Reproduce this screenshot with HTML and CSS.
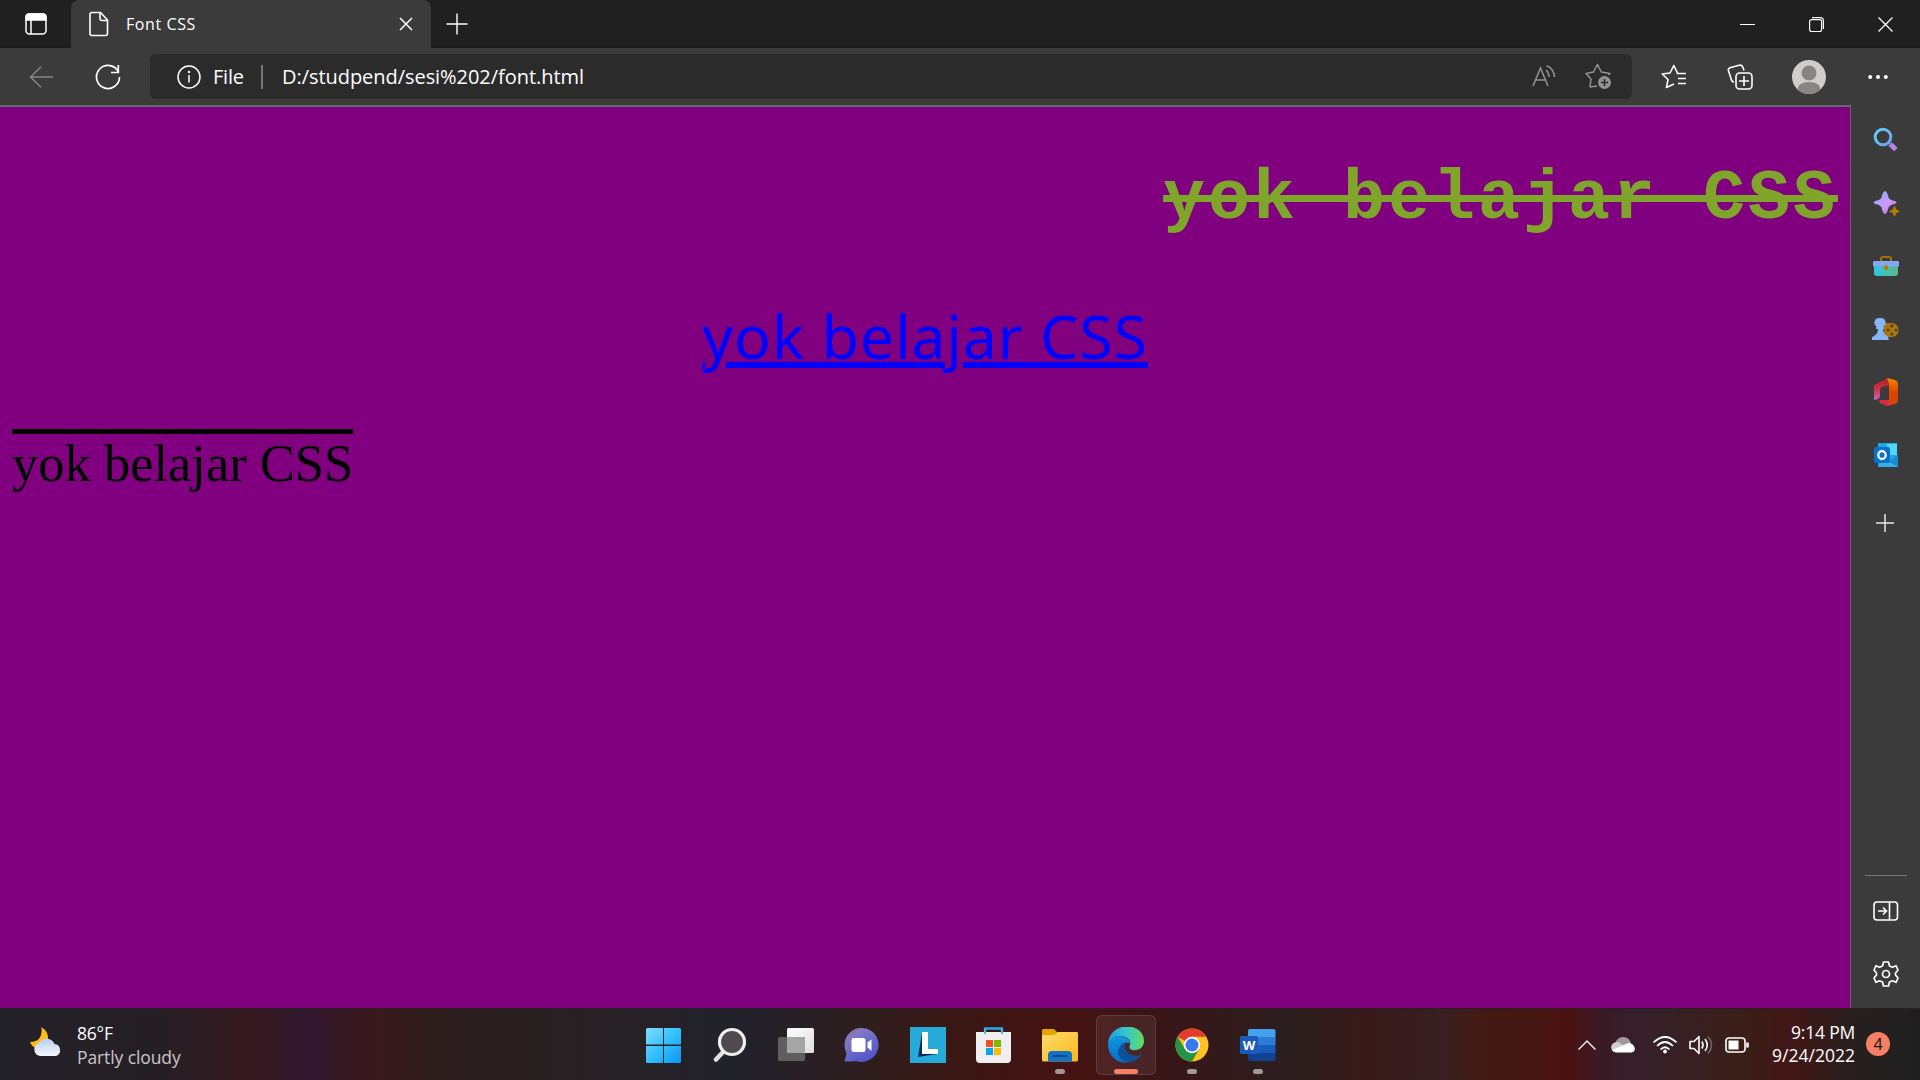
FILE: index.html
```html
<!DOCTYPE html>
<html lang="en">
<head>
<meta charset="utf-8">
<title>Font CSS</title>
<link rel="stylesheet" href="styles.css">
</head>
<body>
<div class="desktop">
  <header class="tabs">
    <svg class="tabs-menu" width="22" height="24" viewBox="0 0 22 24" fill="none" stroke="#fff" stroke-width="1.5"><rect x="1" y="2" width="20" height="20" rx="3.5"/><path d="M1 8V5Q1 2 4 2H18Q21 2 21 5V8Z" fill="#fff"/><path d="M6 8V22"/></svg>
    <div class="tab">
      <svg width="20" height="26" viewBox="0 0 20 26" fill="none" stroke="#fff" stroke-width="1.6" stroke-linejoin="round"><path d="M3 1.5H11.5L18.5 9V22.5Q18.5 24.5 16.5 24.5H3Q1 24.5 1 22.500V3.500Q1 1.500 3 1.500Z"/><path d="M11 1.500V7.500Q11 9.500 13 9.500H18.500"/></svg>
      <span class="tab-title">Font CSS</span>
      <svg width="14" height="14" viewBox="0 0 14 14" stroke="#fff" stroke-width="1.5"><path d="M1 1L13 13M13 1L1 13"/></svg>
    </div>
    <svg class="new-tab" width="22" height="22" viewBox="0 0 22 22" stroke="#fff" stroke-width="1.400"><path d="M11 .5V21.500M.5 11H21.500"/></svg>
    <div class="window-buttons">
      <svg width="15" height="15" viewBox="0 0 15 15" stroke="#fff"><path d="M0 7.500H15"/></svg>
      <svg width="15" height="15" viewBox="0 0 15 15" fill="none" stroke="#fff" stroke-width="1.200"><rect x=".6" y="2.600" width="12" height="12" rx="2"/><path d="M3 .6H11Q14.400 .6 14.400 4V12"/></svg>
      <svg width="15" height="15" viewBox="0 0 15 15" stroke="#fff" stroke-width="1.300"><path d="M.5 .5L14.500 14.500M14.500 .5L.5 14.500"/></svg>
    </div>
  </header>

  <nav class="toolbar">
    <svg class="back" width="24" height="22" viewBox="0 0 24 22" fill="none" stroke="#868686" stroke-width="1.500"><path d="M24 11H1.500M12 .8L1.500 11L12 21.200"/></svg>
    <svg class="reload" width="26" height="26" viewBox="0 0 26 26" fill="none" stroke="#fff" stroke-width="1.700"><path d="M23.500 8.300A11.500 11.500 0 1 0 24.500 13"/><path d="M23.300 1V8.500H16"/></svg>
    <div class="address">
      <svg width="24" height="24" viewBox="0 0 24 24" fill="none" stroke="#fff" stroke-width="1.500"><circle cx="12" cy="12" r="11"/><path d="M12 10V17.500"/><circle cx="12" cy="7" r=".5"/></svg>
      <span class="scheme">File</span>
      <i class="separator"></i>
      <span class="url">D:/studpend/sesi%202/font.html</span>
      <svg class="read-aloud" width="24" height="24" viewBox="0 0 24 24" fill="none" stroke="#929292" stroke-width="1.500"><path d="M1 21L8.500 3L16 21M3.500 15H13.500M14 5Q17 7.500 17 12M14.500 .8Q22 3.500 22.500 12"/></svg>
      <svg width="27" height="27" viewBox="0 0 27 27" fill="none" stroke="#929292" stroke-width="1.500" stroke-linejoin="round"><path d="M12 23L5 24L6 16L1 10.500L8.500 9L12.500 1.500L16.300 9L25 10.500L23.500 12"/><circle cx="19.500" cy="19.500" r="6.500" fill="#929292" stroke="none"/><path d="M19.500 16V23M16 19.500H23" stroke="#2b2b2b"/></svg>
    </div>
    <div class="tools">
      <svg width="26" height="26" viewBox="0 0 26 26" fill="none" stroke="#fff" stroke-width="1.600" stroke-linejoin="round"><path d="M16.500 9L12.800 1.500L9 9L1.200 10L7 15.500L5.500 23.500L13 20M15.500 9.500H25M17 14.500H25M17 19.500H25"/></svg>
      <svg width="26" height="26" viewBox="0 0 26 26" fill="none" stroke="#fff" stroke-width="1.600"><rect x="9" y="9" width="16" height="16" rx="3.500"/><path d="M17 12V22M12 17H22M7 18Q5 18 4.300 15.500L1.400 6.500Q.8 4.500 3 3.700L12 1.300Q15 .5 16 3.500L17 6.500"/></svg>
      <svg class="avatar" width="34" height="34" viewBox="0 0 34 34"><circle cx="17" cy="17" r="17" fill="#d0cecb"/><circle cx="17" cy="13" r="7.500" fill="#8a8583"/><path d="M5.500 29.500Q6 22 17 22T28.500 29.500A17 17 0 0 1 5.500 29.500" fill="#8a8583"/></svg>
      <svg width="20" height="6" viewBox="0 0 20 6" fill="#fff"><circle cx="2.200" cy="3" r="2"/><circle cx="10" cy="3" r="2"/><circle cx="17.800" cy="3" r="2"/></svg>
    </div>
  </nav>

  <div class="workspace">
    <main class="page">
      <p class="line strike">yok belajar CSS</p>
      <p class="line under">yok belajar CSS</p>
      <p class="line over">yok belajar CSS</p>
    </main>
    <aside class="sidebar">
      <div class="side-item"><svg width="26" height="26" viewBox="0 0 26 26"><defs><linearGradient id="lens" x1="0" y1="0" x2="1" y2="1"><stop stop-color="#62d2f2"/><stop offset="1" stop-color="#6f9cf5"/></linearGradient></defs><path d="M17 17L23 22.500" stroke="#b981ec" stroke-width="5"/><path d="M15 15L18 18" stroke="#8b8585" stroke-width="1.500"/><circle cx="10" cy="10" r="7.800" fill="none" stroke="url(#lens)" stroke-width="3"/></svg></div>
      <div class="side-item"><svg width="28" height="28" viewBox="0 0 28 28"><defs><linearGradient id="spark" x1="0" y1="0" x2="1" y2="1"><stop stop-color="#7db2ff"/><stop offset=".6" stop-color="#cf96fa"/><stop offset="1" stop-color="#9b70e5"/></linearGradient></defs><path d="M13 2Q15 2 16.500 8.500Q17.500 11 23.500 12.300Q25.500 13.500 23.500 14.700Q17.500 16 16.500 18.500Q15 25 13 25Q11 25 9.500 18.500Q8.500 16 2.500 14.700Q.8 13.500 2.500 12.300Q8.500 11 9.500 8.500Q11 2 13 2Z" fill="url(#spark)"/><path d="M22.500 16.500L24.500 20.500L28 22.200L24.500 24L22.500 28L20.500 24L17 22.200L20.500 20.500Z" fill="#b67b00"/></svg></div>
      <div class="side-item"><svg width="26" height="22" viewBox="0 0 26 22"><defs><linearGradient id="box"><stop stop-color="#29c7e5"/><stop offset="1" stop-color="#5eb888"/></linearGradient></defs><path d="M8 7V4Q8 2 10 2H16Q18 2 18 4V7" fill="none" stroke="#a97005" stroke-width="2"/><path d="M1 8H25V18Q25 21 22 21H4Q1 21 1 18Z" fill="url(#box)"/><rect y="6" width="26" height="5.500" rx="1" fill="#83a8f5"/><rect x="11" y="10" width="4" height="5" rx="1.500" fill="#b97a09"/></svg></div>
      <div class="side-item"><svg width="28" height="24" viewBox="0 0 28 24"><circle cx="19.500" cy="13" r="7" fill="#b17b0c"/><rect x="12" y="6" width="8" height="14" fill="#a97308"/><g fill="#494027"><circle cx="20" cy="9" r="1.500"/><circle cx="16" cy="13" r="1.500"/><circle cx="24" cy="13" r="1.500"/><circle cx="20" cy="17" r="1.500"/></g><path d="M8 1A4.800 4.800 0 0 1 11 10H12V12H11Q11 17 15 19Q17 20 16.500 23H0Q-1 20 2 19Q6 17 6 12H4V10H5A4.800 4.800 0 0 1 8 1Z" fill="#87b6fb"/></svg></div>
      <div class="side-item"><svg width="26" height="30" viewBox="0 0 26 30"><defs><linearGradient id="office" x1="0" y1="0" x2="0" y2="1"><stop stop-color="#ad1b2c"/><stop offset=".5" stop-color="#d52e45"/><stop offset="1" stop-color="#c16ac9"/></linearGradient><linearGradient id="officeR" x1="0" y1="0" x2="0" y2="1"><stop stop-color="#f38b00"/><stop offset=".5" stop-color="#df4300"/><stop offset="1" stop-color="#d84110"/></linearGradient></defs><path d="M1 8L15 1L16 8L9 10Q7 11 7 13V19Q7 21 5 22L1 23Z" fill="url(#office)"/><path d="M14 1L22 3Q25 4 25 7V23Q25 26 22 27L14 29L16 24V7Z" fill="url(#officeR)"/><path d="M6 24Q6 23 8 23H16V29H14L7 26Z" fill="#d62d3e"/></svg></div>
      <div class="side-item"><svg width="26" height="26" viewBox="0 0 26 26"><path d="M5 1H24V25H5Z" fill="#20a7e6"/><path d="M14 2H24V13H14Z" fill="#50d6fb"/><path d="M10 25L25 12V25Z" fill="#168dd1"/><path d="M10 16L25 25H6Z" fill="#36b1e8"/><rect x="1" y="5" width="16" height="16" rx="2" fill="#0872cb"/><ellipse cx="9" cy="13" rx="3.700" ry="4" fill="none" stroke="#fff" stroke-width="2.300"/></svg></div>
      <div class="side-item add"><svg width="18" height="18" viewBox="0 0 18 18" stroke="#e7e7e7" stroke-width="1.500"><path d="M9 0V18M0 9H18"/></svg></div>
      <div class="side-bottom">
        <div class="side-item"><svg width="26" height="20" viewBox="0 0 26 20" fill="none" stroke="#fff" stroke-width="1.600"><rect x="1" y="1" width="23.500" height="18" rx="3"/><path d="M16.500 1V19M5 10H13M10 6.500L13.500 10L10 13.500"/></svg></div>
        <div class="side-item"><svg width="26" height="26" viewBox="0 0 26 26" fill="none" stroke="#fff" stroke-width="1.700" stroke-linejoin="round"><path d="M10.500 1H15.500L16.500 5L19.500 6.200L23 4.700L25 9L22.500 12V14L25 17L23 21.300L19.500 19.800L16.500 21L15.500 25H10.500L9.500 21L6.500 19.800L3 21.300L1 17L3.500 14V12L1 9L3 4.700L6.500 6.200L9.500 5Z"/><circle cx="13" cy="13" r="3.500"/></svg></div>
      </div>
    </aside>
  </div>

  <footer class="taskbar">
    <div class="weather">
      <svg width="34" height="32" viewBox="0 0 34 32"><defs><linearGradient id="cloud" x1="0" y1="0" x2="0" y2="1"><stop stop-color="#b8cdf0"/><stop offset="1" stop-color="#f4f7fc"/></linearGradient></defs><path d="M12.500 1Q20 6 19 14Q14 23 7 22Q3 21 1 16Q14 16 12.500 1Z" fill="#ffbc12"/><path d="M11 30A6.500 6.500 0 0 1 9.500 17.500Q12 12.500 18 12.500Q24 13.500 25.500 18A6.200 6.200 0 0 1 27 30Z" fill="url(#cloud)"/></svg>
      <div class="weather-text"><span>86°F</span><span class="condition">Partly cloudy</span></div>
    </div>
    <div class="apps">
      <div class="app"><svg width="36" height="36" viewBox="0 0 36 36"><defs><linearGradient id="win" gradientUnits="userSpaceOnUse" x1="0" y1="0" x2="36" y2="36"><stop stop-color="#83ddff"/><stop offset=".5" stop-color="#33c1fb"/><stop offset="1" stop-color="#0a94f5"/></linearGradient></defs><path d="M1.500 1H17V17.500H0V2.500Q0 1 1.500 1ZM18 1H33.500Q35 1 35 2.500V17.500H18ZM0 19H17V36H1.500Q0 36 0 34.500ZM18 19H35V34.500Q35 36 33.500 36H18Z" fill="url(#win)"/></svg></div>
      <div class="app"><svg width="36" height="36" viewBox="0 0 36 36"><path d="M12 24L4 32.500" stroke="#dfe0e3" stroke-width="4.500" stroke-linecap="round"/><circle cx="20" cy="15" r="12.500" fill="#504a4e" stroke="#eeeff1" stroke-width="3.200"/></svg></div>
      <div class="app"><svg width="36" height="36" viewBox="0 0 36 36"><defs><linearGradient id="pane" x1="0" y1="0" x2="1" y2="1"><stop stop-color="#fff"/><stop offset="1" stop-color="#ddd"/></linearGradient></defs><rect x="9" y="1" width="27" height="25" rx="1.500" fill="url(#pane)"/><rect y="10" width="27" height="24" rx="1.500" fill="#5e5e5e"/><path d="M9 10H27V26H9Z" fill="#a5a5a5"/></svg></div>
      <div class="app"><svg width="36" height="36" viewBox="0 0 36 36"><defs><linearGradient id="chat" x1="0" y1="0" x2=".6" y2="1"><stop stop-color="#9b6aa5"/><stop offset=".3" stop-color="#8079c4"/><stop offset=".7" stop-color="#6366cb"/><stop offset="1" stop-color="#5454c9"/></linearGradient></defs><path d="M.5 34.500L2.500 26.500Q-.5 20 1 14A17 17 0 1 1 12 34Q7 34.500 .5 34.500Z" fill="url(#chat)"/><rect x="7.500" y="11" width="14" height="14" rx="2.500" fill="#fff"/><path d="M23.500 15.500L27.500 12.500V24L23.500 20.500Z" fill="#fff"/></svg></div>
      <div class="app"><svg width="36" height="36" viewBox="0 0 36 36"><path d="M0 0H36V36H0Z" fill="#26abd8"/><path d="M12 6L8 30L27 27L14 24Z" fill="#06285b"/><path d="M12 5H18V22H28V27H12Z" fill="#fff"/></svg></div>
      <div class="app"><svg width="36" height="36" viewBox="0 0 36 36"><path d="M9 8V1.500H26V8" fill="none" stroke="#2ca9e8" stroke-width="2.300"/><path d="M0 5H35V32Q35 36 31 36H4Q0 36 0 32Z" fill="#efefef"/><path d="M9 7V2M26 7V2" stroke="#42b8ee" stroke-width="2"/><path fill="#f24e22" d="M10 13H17V20H10Z"/><path fill="#7fb900" d="M18 13H25V20H18Z"/><path fill="#05a4ef" d="M10 21H17V28H10Z"/><path fill="#ffba08" d="M18 21H25V28H18Z"/></svg></div>
      <div class="app running"><svg width="36" height="36" viewBox="0 0 36 36"><defs><linearGradient id="folder" x1="0" y1="0" x2="1" y2="1"><stop stop-color="#ffda70"/><stop offset="1" stop-color="#f9b915"/></linearGradient></defs><path d="M0 12V3Q0 2 2 2H12L16 6V12Z" fill="#e5a400"/><path d="M0 9Q0 8 2 8H12L16 5H35Q36 5 36 7V33Q36 34.500 34 34.500H2Q0 34.500 0 33Z" fill="url(#folder)"/><path d="M6 34.500V28Q6 24 10 24H26Q30 24 30 28V34.500Z" fill="#1272c3"/><path d="M11 29H25" stroke="#08488c" stroke-width="2"/></svg></div>
      <div class="app running active"><svg width="36" height="36" viewBox="0 0 36 36"><defs><linearGradient id="edgeTop"><stop stop-color="#249cdb"/><stop offset=".5" stop-color="#34c6cf"/><stop offset="1" stop-color="#63dc5c"/></linearGradient><linearGradient id="edgeSide" x1="0" y1="0" x2="0" y2="1"><stop stop-color="#1298dd"/><stop offset="1" stop-color="#0869c9"/></linearGradient></defs><path d="M0 18C0-6 36-6 36 14C36 21 30 24 24 23Q20 22 22 18Q23 10 13 9Q3 9 0 18Z" fill="url(#edgeTop)"/><path d="M0 18Q2 9 12 9Q21 10 22 16Q12 14 12 23Q13 34 25 34Q16 38 8 33Q0 27 0 18Z" fill="url(#edgeSide)"/><path d="M18 15Q9 19 10 27Q14 36 23 35Q30 33 34 27Q26 31 20 26Q15 21 18 15Z" fill="#0f509c"/></svg></div>
      <div class="app running"><svg width="36" height="36" viewBox="0 0 36 36"><circle cx="18" cy="18" r="16.500" fill="#ffc222"/><path d="M18 18L3.700 9.700A16.500 16.500 0 0 1 32.300 9.750H18Z" fill="#e33b2e"/><path d="M3.700 9.700A16.500 16.500 0 0 0 18 34.500L25.100 22.100L10.900 22.100Z" fill="#249447"/><circle cx="18" cy="18" r="8.200" fill="#fff"/><circle cx="18" cy="18" r="6.500" fill="#397af0"/></svg></div>
      <div class="app running"><svg width="36" height="36" viewBox="0 0 36 36"><path d="M8 10V4Q8 2 10 2H33.500Q35.500 2 35.500 4V10Z" fill="#42a2ed"/><path d="M8 10H35.500V18H8Z" fill="#2c7cd6"/><path d="M8 18H35.500V26H8Z" fill="#195cbe"/><path d="M8 26H35.500V32Q35.500 34 33.500 34H10Q8 34 8 32Z" fill="#11418f"/><rect y="9" width="18" height="18" rx="1.500" fill="#1b5abc"/><text class="word-letter" x="9" y="23" text-anchor="middle">W</text></svg></div>
    </div>
    <div class="tray">
      <svg width="18" height="12" viewBox="0 0 18 12" fill="none" stroke="#eee" stroke-width="1.500"><path d="M.5 10.500L9 2L17.500 10.500"/></svg>
      <svg width="24" height="18" viewBox="0 0 24 18"><path d="M4 8Q6 1 12 1T20 7L12 11Z" fill="#a2989b"/><path d="M5 16Q0 15 0 11Q1 6 7 6L20 14Z" fill="#d2cccf"/><path d="M1 14L15 8Q18 6 21 8Q24 10 24 13Q23 16.500 20 16.500H5Q2 16 1 14Z" fill="#fff"/></svg>
      <svg width="24" height="18" viewBox="0 0 24 18" fill="none" stroke="#fff" stroke-width="1.700"><path d="M.5 6.500Q12-4.500 23.500 6.500M4 10Q12 2 20 10M7.500 13.500Q12 9 16.500 13.500"/><circle cx="12" cy="15.500" r="1.500" fill="#fff" stroke-width="1"/></svg>
      <svg width="24" height="20" viewBox="0 0 24 20" fill="none" stroke="#fff" stroke-width="1.600" stroke-linejoin="round"><path d="M1 6.500H5L10 1.500V18.500L5 13.500H1ZM13 6.500Q15 10 13 13.500M16 4Q20.500 10 16 16"/><path d="M19 1.500Q26 10 19 18.500" stroke="#756069"/></svg>
      <svg width="24" height="16" viewBox="0 0 24 16" fill="none" stroke="#fff" stroke-width="1.600"><rect x="1" y="1" width="19" height="14" rx="3"/><path d="M3.500 3.500H13.500V12.500H3.500Z" fill="#fff" stroke="none"/><path d="M22.500 5.500V10.500" stroke-width="2.500"/></svg>
      <div class="clock"><span>9:14 PM</span><span class="date">9/24/2022</span></div>
      <span class="badge">4</span>
    </div>
  </footer>
</div>
</body>
</html>
```
FILE: styles.css
```css
* { box-sizing: border-box; }

body {
  margin: 0;
  font-family: "Open Sans", "Noto Sans", sans-serif;
  color: #fff;
}

svg { display: block; flex: none; }

.desktop {
  width: 1920px;
  height: 1080px;
  display: flex;
  flex-direction: column;
  overflow: hidden;
  white-space: nowrap;
}

/* Tab strip */
.tabs {
  height: 48px;
  flex: none;
  display: flex;
  align-items: center;
  padding-left: 25px;
  background: linear-gradient(#202020 45px, #191919);
}

.tab {
  width: 360px;
  height: 48px;
  margin-left: 24px;
  padding: 0 18px 0 18px;
  display: flex;
  align-items: center;
  background: #3b3b3b;
  border-radius: 8px 8px 0 0;
}

.tab-title {
  flex: 1;
  margin-left: 17px;
  font-size: 16px;
  letter-spacing: 0.6px;
}

.new-tab { margin-left: 15px; }

.window-buttons {
  display: flex;
  gap: 54px;
  margin-left: auto;
  padding-right: 27px;
}

/* Navigation toolbar */
.toolbar {
  height: 57px;
  flex: none;
  display: flex;
  align-items: center;
  padding: 0 32px 0 29px;
  background: #3b3b3b;
}

.reload { margin-left: 42px; }

.address {
  width: 1482px;
  height: 45px;
  margin-left: 29px;
  padding: 0 20px 0 27px;
  display: flex;
  align-items: center;
  background: #2b2b2b;
  border-radius: 6px;
  font-size: 20px;
}

.scheme { width: 31px; margin-left: 12px; letter-spacing: -0.2px; }

.separator {
  width: 2px;
  height: 24px;
  margin: 0 19px 0 17px;
  background: #777;
}

.url { letter-spacing: -0.05px; }

.read-aloud { margin-left: auto; margin-right: 29px; }

.tools {
  flex: 1;
  display: flex;
  align-items: center;
  justify-content: space-between;
  margin-left: 29px;
}

.avatar { margin: 0 2px 0 -2px; }

/* Viewport and sidebar */
.workspace { flex: 1; display: flex; min-height: 0; background: #3b3b3b; }

.page {
  width: 1851px;
  padding: 0 12px;
  background: #800080;
  border-top: 2px solid #686868;
  border-right: 1px solid #686868;
}

.line { margin: 0; }

.strike {
  margin-top: 50px;
  text-align: right;
  font: bold 70px/85px "Liberation Mono", monospace;
  letter-spacing: 2.99px;
  color: #7fa52a;
  text-decoration: line-through;
  text-decoration-thickness: 7px;
}

.under {
  margin-top: 49px;
  text-align: center;
  font: 61px/90px "Noto Sans", sans-serif;
  letter-spacing: 0.7px;
  color: #00f;
  text-decoration: underline;
  text-decoration-thickness: 6px;
  text-underline-offset: 3px;
}

.over {
  margin-top: 52px;
  font: 52.5px/60px "Liberation Serif", serif;
  color: #000;
  text-decoration: overline;
  text-decoration-thickness: 5px;
}

.sidebar {
  flex: 1;
  display: flex;
  flex-direction: column;
  align-items: center;
  padding-top: 3px;
}

.side-item {
  height: 63px;
  flex: none;
  display: flex;
  align-items: center;
  justify-content: center;
}

.add { height: 73px; padding-right: 2px; }

.side-bottom {
  width: 42px;
  margin-top: auto;
  padding: 3px 0;
  border-top: 1px solid #777;
}

/* Taskbar */
.taskbar {
  height: 72px;
  flex: none;
  display: flex;
  border-top: 1px solid #2a2023;
  background: linear-gradient(90deg, #222127 0, #241f25 150px, #34191f 250px, #321830 310px, #3a191d 370px, #2c1e1e 450px, #272226 620px, #22222c 740px, #301d1c 880px, #3b1714 960px, #451212 1080px, #351719 1190px, #2c1e1f 1290px, #381b19 1370px, #371f22 1440px, #431b14 1480px, #451712 1530px, #4b1212 1568px, #391b26 1605px, #35202c 1645px, #3a1f18 1735px, #421716 1790px, #261f1f 1860px, #1f1f20 1920px);
}

.weather {
  width: 631px;
  padding: 17px 0 0 29px;
  display: flex;
  gap: 14px;
}

.weather-text { display: flex; flex-direction: column; margin-top: -5px; font-size: 17.5px; line-height: 24px; letter-spacing: -0.2px; }
.condition { color: #c9c6c8; letter-spacing: -0.1px; }

.apps { display: flex; }

.app {
  position: relative;
  width: 66px;
  height: 71px;
  display: flex;
  align-items: center;
  justify-content: center;
}

.running::after {
  content: "";
  position: absolute;
  left: 28px;
  bottom: 6px;
  width: 10px;
  height: 5px;
  border-radius: 3px;
  background: #a29799;
}

.active::before {
  content: "";
  position: absolute;
  inset: 6px 3px 5px;
  border: 1px solid #ffffff1c;
  border-radius: 6px;
  background: #ffffff12;
}

.active svg { position: relative; }
.active::after { left: 21px; width: 24px; background: #f58064; }

.word-letter { font: bold 13px "Open Sans", sans-serif; fill: #fff; }

.tray {
  flex: 1;
  display: flex;
  align-items: center;
  padding: 0 30px 0 287px;
  gap: 12px;
}

.tray svg:nth-child(2) { margin-left: 3px; }
.tray svg:nth-child(3) { margin-left: 6px; }

.clock {
  flex: 1;
  display: flex;
  flex-direction: column;
  margin: -2px -1px 0 0;
  text-align: right;
  font-size: 17.5px;
  line-height: 23px;
  letter-spacing: -0.2px;
}

.date { letter-spacing: 0; }

.badge {
  width: 24px;
  height: 24px;
  margin-top: -1px;
  border-radius: 50%;
  background: #f58064;
  color: #111;
  font-size: 16px;
  line-height: 24px;
  text-align: center;
}
```
